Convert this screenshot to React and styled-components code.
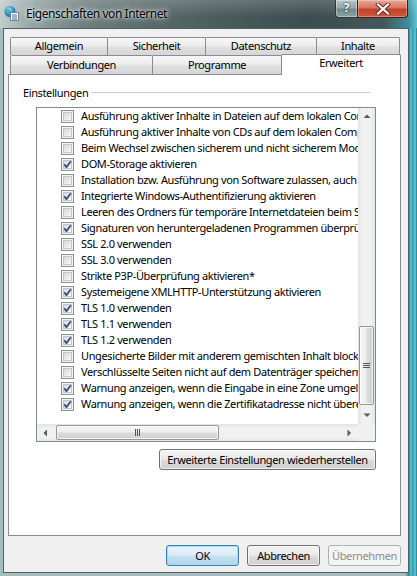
import React from 'react';
import styled, { createGlobalStyle } from 'styled-components';

const GlobalStyle = createGlobalStyle`
  html, body {
    margin: 0;
    padding: 0;
    background: #2a8797;
  }
  body {
    font-family: "Segoe UI", "Noto Sans", "Open Sans", sans-serif;
    font-size: 11px;
    letter-spacing: -0.38px;
    color: #000;
  }
  * { box-sizing: border-box; }
`;

const settings = [
    { label: 'Ausführung aktiver Inhalte in Dateien auf dem lokalen Computer zulassen*', checked: false },
    { label: 'Ausführung aktiver Inhalte von CDs auf dem lokalen Computer zulassen*', checked: false },
    { label: 'Beim Wechsel zwischen sicherem und nicht sicherem Modus warnen', checked: false },
    { label: 'DOM-Storage aktivieren', checked: true },
    { label: 'Installation bzw. Ausführung von Software zulassen, auch wenn die Signatur ungültig ist', checked: false },
    { label: 'Integrierte Windows-Authentifizierung aktivieren', checked: true },
    { label: 'Leeren des Ordners für temporäre Internetdateien beim Schließen des Browsers', checked: false },
    { label: 'Signaturen von heruntergeladenen Programmen überprüfen', checked: true },
    { label: 'SSL 2.0 verwenden', checked: false },
    { label: 'SSL 3.0 verwenden', checked: false },
    { label: 'Strikte P3P-Überprüfung aktivieren*', checked: false },
    { label: 'Systemeigene XMLHTTP-Unterstützung aktivieren', checked: true },
    { label: 'TLS 1.0 verwenden', checked: true },
    { label: 'TLS 1.1 verwenden', checked: true },
    { label: 'TLS 1.2 verwenden', checked: true },
    { label: 'Ungesicherte Bilder mit anderem gemischten Inhalt blockieren', checked: false },
    { label: 'Verschlüsselte Seiten nicht auf dem Datenträger speichern', checked: false },
    { label: 'Warnung anzeigen, wenn die Eingabe in eine Zone umgeleitet wird', checked: true },
    { label: 'Warnung anzeigen, wenn die Zertifikatadresse nicht übereinstimmt*', checked: true },
];

const topTabs = [
    { label: 'Allgemein', w: 98 },
    { label: 'Sicherheit', w: 99 },
    { label: 'Datenschutz', w: 112 },
    { label: 'Inhalte', w: 84 },
];

const bottomTabs = [
    { label: 'Verbindungen', w: 143 },
    { label: 'Programme', w: 130 },
    { label: 'Erweitert', w: 120, active: true },
];

const AppIcon = () => (
    <svg width="16" height="16" viewBox="0 0 16 16">
        <defs>
            <radialGradient id="globe" cx="40%" cy="35%" r="70%">
                <stop offset="0" stopColor="#bfe8ff" />
                <stop offset="0.5" stopColor="#3d9be0" />
                <stop offset="1" stopColor="#1b5aa8" />
            </radialGradient>
        </defs>
        <circle cx="7" cy="6.5" r="5.5" fill="url(#globe)" />
        <path d="M3 5 q2 -2 4 0 q1 2 -1 3 q-2 0 -3 -3z" fill="#4caf50" opacity="0.8" />
        <rect x="7.5" y="7.5" width="8" height="8" fill="#fff" stroke="#6f8796" />
        <rect x="9" y="9.5" width="5" height="1" fill="#2c6fb5" />
        <rect x="9" y="11.5" width="5" height="1" fill="#2c6fb5" />
        <rect x="9" y="13.5" width="5" height="1" fill="#2c6fb5" />
    </svg>
);

const CheckMark = ({ checked }) => (
    <CheckBox>
        <svg width="13" height="13" viewBox="0 0 13 13">
            <defs>
                <linearGradient id="cbFill" x1="0" y1="0" x2="1" y2="1">
                    <stop offset="0" stopColor="#d6d6d6" />
                    <stop offset="1" stopColor="#fbfbfb" />
                </linearGradient>
            </defs>
            <rect x="0.5" y="0.5" width="12" height="12" fill="#f4f4f4" stroke="#8e8f8f" />
            <rect x="2.5" y="2.5" width="8" height="8" fill="url(#cbFill)" stroke="#c6c6c6" />
            {checked && (
                <path d="M3.2 6.4 L5.4 9.2 L9.8 3.2" fill="none" stroke="#3b4f8f" strokeWidth="1.9" strokeLinejoin="round" />
            )}
        </svg>
    </CheckBox>
);

const Arrow = ({ dir }) => {
    const shapes = {
        up: 'M0.5 4 L4 0.5 L7.5 4 Z',
        down: 'M0.5 0.5 L4 4 L7.5 0.5 Z',
        left: 'M4 0.5 L0.5 4 L4 7.5 Z',
        right: 'M0.5 0.5 L4 4 L0.5 7.5 Z',
    };
    const vertical = dir === 'up' || dir === 'down';
    return (
        <svg width={vertical ? 8 : 5} height={vertical ? 5 : 8} viewBox={vertical ? '0 0 8 5' : '0 0 5 8'}>
            <path d={shapes[dir]} fill="#5a5a5a" />
        </svg>
    );
};

const App = () => {
    return (
        <>
            <GlobalStyle />
            <Window>
                <TitleBar>
                    <IconWrap><AppIcon /></IconWrap>
                    <Title>Eigenschaften von Internet</Title>
                    <Caption>
                        <HelpButton>?</HelpButton>
                        <CloseButton>
                            <svg width="16" height="12" viewBox="0 0 16 12">
                                <path d="M3 1.5 L13 10.5 M13 1.5 L3 10.5" stroke="#5c2a22" strokeWidth="4" strokeLinecap="square" />
                                <path d="M3 1.5 L13 10.5 M13 1.5 L3 10.5" stroke="#fff" strokeWidth="2.2" strokeLinecap="square" />
                            </svg>
                        </CloseButton>
                    </Caption>
                </TitleBar>
                <Frame>
                    <Client>
                        <Tabs>
                            <TabRow $h={18}>
                                {topTabs.map((t) => (
                                    <Tab key={t.label} $w={t.w} $h={18}>{t.label}</Tab>
                                ))}
                            </TabRow>
                            <TabRow $h={19}>
                                {bottomTabs.map((t) => (
                                    <Tab key={t.label} $w={t.w} $h={t.active ? 21 : 19} $active={t.active}>{t.label}</Tab>
                                ))}
                            </TabRow>
                            <Page>
                                <GroupHeader>
                                    <span>Einstellungen</span>
                                    <GroupLine />
                                </GroupHeader>
                                <ListBox>
                                    <Rows>
                                        {settings.map((s) => (
                                            <Row key={s.label}>
                                                <CheckMark checked={s.checked} />
                                                <RowText>{s.label}</RowText>
                                            </Row>
                                        ))}
                                    </Rows>
                                    <VScroll>
                                        <ArrowBox><Arrow dir="up" /></ArrowBox>
                                        <VTrack>
                                            <VThumb>
                                                <Grip $vertical />
                                            </VThumb>
                                        </VTrack>
                                        <ArrowBox><Arrow dir="down" /></ArrowBox>
                                    </VScroll>
                                    <HScroll>
                                        <ArrowBox><Arrow dir="left" /></ArrowBox>
                                        <HTrack>
                                            <HThumb>
                                                <Grip />
                                            </HThumb>
                                        </HTrack>
                                        <ArrowBox><Arrow dir="right" /></ArrowBox>
                                    </HScroll>
                                    <Corner />
                                </ListBox>
                                <ResetRow>
                                    <Button $w={217}>Erweiterte Einstellungen wiederherstellen</Button>
                                </ResetRow>
                            </Page>
                        </Tabs>
                        <ButtonRow>
                            <Button $w={73} $default>OK</Button>
                            <Button $w={73}>Abbrechen</Button>
                            <Button $w={73} $disabled>Übernehmen</Button>
                        </ButtonRow>
                    </Client>
                </Frame>
            </Window>
        </>
    );
};

const Window = styled.div`
    width: 417px;
    height: 576px;
    display: flex;
    flex-direction: column;
    overflow: hidden;
`;

const TitleBar = styled.div`
    height: 28px;
    flex: none;
    display: flex;
    align-items: flex-start;
    padding-left: 3px;
    background:
        linear-gradient(180deg, rgba(255,255,255,0.18) 0%, rgba(255,255,255,0) 60%),
        linear-gradient(90deg, #c3cdcd 0%, #93a3a3 8%, #6f8081 20%, #5b6b6c 35%, #4a595a 55%, #3d4c4e 75%, #44585b 92%, #3c8e9c 98%, #5ec3d2 100%);
`;

const IconWrap = styled.div`
    margin-top: 5px;
    width: 16px;
    height: 16px;
`;

const Title = styled.div`
    margin: 6px 0 0 7px;
    font-size: 12px;
    letter-spacing: -0.45px;
    line-height: 16px;
    color: #000;
    text-shadow: 0 0 6px rgba(255,255,255,0.9), 0 0 3px rgba(255,255,255,0.9);
`;

const Caption = styled.div`
    margin-left: auto;
    margin-right: 9px;
    display: flex;
`;

const HelpButton = styled.div`
    width: 22px;
    height: 18px;
    border: 1px solid #2c3a3c;
    border-top: none;
    border-right: none;
    border-radius: 0 0 0 4px;
    background: linear-gradient(180deg, #b7c6c8 0%, #93a7aa 48%, #6e878b 52%, #8aa6aa 100%);
    box-shadow: inset 0 0 0 1px rgba(255,255,255,0.35);
    color: #fff;
    font-weight: bold;
    font-size: 12px;
    line-height: 16px;
    letter-spacing: 0;
    text-align: center;
    text-shadow: 0 0 2px #1f2d2f, 0 0 1px #1f2d2f;
`;

const CloseButton = styled.div`
    width: 51px;
    height: 18px;
    border: 1px solid #4a1a12;
    border-top: none;
    border-radius: 0 0 4px 0;
    background: linear-gradient(180deg, #e7a896 0%, #d8755f 45%, #c2412a 55%, #d0583f 100%);
    box-shadow: inset 0 0 0 1px rgba(255,255,255,0.3);
    display: flex;
    align-items: center;
    justify-content: center;
`;

const Frame = styled.div`
    flex: 1;
    display: flex;
    padding: 0 8px 3px 3px;
    background: linear-gradient(90deg, #a7bcbe 0px, #a7bcbe 405px, #2a8797 409px, #5fc7d6 411px, #2c95a8 413px, #6ccfdc 415px, #237686 417px);
`;

const Client = styled.div`
    flex: 1;
    display: flex;
    flex-direction: column;
    border: 1px solid #4c6265;
    background: #f0f0f0;
    padding: 8px 7px 0 4px;
`;

const Tabs = styled.div`
    width: 393px;
    display: flex;
    flex-direction: column;
`;

const TabRow = styled.div`
    height: ${(p) => p.$h}px;
    display: flex;
    align-items: flex-end;
    padding-left: 2px;
`;

const Tab = styled.div`
    position: relative;
    width: ${(p) => p.$w}px;
    height: ${(p) => p.$h}px;
    margin-left: -1px;
    &:first-child { margin-left: 0; }
    border: 1px solid #898c95;
    border-bottom: none;
    border-radius: 2px 2px 0 0;
    text-align: center;
    font-size: 11px;
    line-height: ${(p) => (p.$active ? 16 : p.$h - 2)}px;
    background: ${(p) => (p.$active ? '#fff' : 'linear-gradient(180deg, #f7f7f7 0%, #ededed 45%, #dfdfdf 55%, #d6d6d6 100%)')};
    margin-bottom: ${(p) => (p.$active ? '-1px' : '0')};
    z-index: ${(p) => (p.$active ? 2 : 1)};
`;

const Page = styled.div`
    height: 462px;
    background: #fff;
    border: 1px solid #898c95;
    display: flex;
    flex-direction: column;
`;

const GroupHeader = styled.div`
    display: flex;
    align-items: center;
    margin: 9px 30px 0 14px;
    height: 16px;
    font-size: 11px;
`;

const GroupLine = styled.div`
    flex: 1;
    margin-left: 3px;
    border-top: 1px solid #c9cdd2;
`;

const ListBox = styled.div`
    margin: 7px 0 0 27px;
    width: 340px;
    height: 335px;
    border: 1px solid #828790;
    display: grid;
    grid-template-columns: 1fr 17px;
    grid-template-rows: 1fr 17px;
    background: #fff;
`;

const Rows = styled.div`
    overflow: hidden;
    display: flex;
    flex-direction: column;
`;

const Row = styled.div`
    height: 16px;
    flex: none;
    display: flex;
    align-items: center;
    padding-left: 24px;
    gap: 7px;
    white-space: nowrap;
`;

const CheckBox = styled.span`
    flex: none;
    width: 13px;
    height: 13px;
    display: flex;
`;

const RowText = styled.span`
    flex: none;
    font-size: 11px;
    line-height: 16px;
`;

const VScroll = styled.div`
    display: flex;
    flex-direction: column;
    background: linear-gradient(90deg, #e3e3e3 0%, #f1f1f1 25%, #f1f1f1 75%, #e6e6e6 100%);
`;

const HScroll = styled.div`
    display: flex;
    background: linear-gradient(180deg, #e3e3e3 0%, #f1f1f1 25%, #f1f1f1 75%, #e6e6e6 100%);
`;

const ArrowBox = styled.div`
    width: 17px;
    height: 17px;
    flex: none;
    display: flex;
    align-items: center;
    justify-content: center;
`;

const VTrack = styled.div`
    flex: 1;
    display: flex;
    flex-direction: column;
    justify-content: flex-end;
    padding: 0 1px 2px 1px;
`;

const HTrack = styled.div`
    flex: 1;
    display: flex;
    padding: 1px 0 1px 2px;
`;

const VThumb = styled.div`
    height: 79px;
    border: 1px solid #979797;
    border-radius: 2px;
    background: linear-gradient(90deg, #f6f6f6 0%, #ececec 48%, #dcdcdc 52%, #d0d0d0 100%);
    box-shadow: inset 0 0 0 1px rgba(255,255,255,0.7);
    display: flex;
    align-items: center;
    justify-content: center;
`;

const HThumb = styled.div`
    width: 163px;
    border: 1px solid #979797;
    border-radius: 2px;
    background: linear-gradient(180deg, #f6f6f6 0%, #ececec 48%, #dcdcdc 52%, #d0d0d0 100%);
    box-shadow: inset 0 0 0 1px rgba(255,255,255,0.7);
    display: flex;
    align-items: center;
    justify-content: center;
`;

const Grip = styled.div`
    width: ${(p) => (p.$vertical ? '7px' : '5px')};
    height: ${(p) => (p.$vertical ? '5px' : '7px')};
    background: ${(p) =>
        p.$vertical
            ? 'repeating-linear-gradient(180deg, #555 0 1px, transparent 1px 2px)'
            : 'repeating-linear-gradient(90deg, #555 0 1px, transparent 1px 2px)'};
`;

const Corner = styled.div`
    background: #f0f0f0;
`;

const ResetRow = styled.div`
    display: flex;
    justify-content: flex-end;
    margin: 7px 24px 0 0;
`;

const Button = styled.div`
    width: ${(p) => p.$w}px;
    height: 21px;
    border: 1px solid ${(p) => (p.$default ? '#3c7fb1' : p.$disabled ? '#adb2b5' : '#707070')};
    border-radius: 3px;
    background: ${(p) =>
        p.$default
            ? 'linear-gradient(180deg, #eaf4fa 0%, #dcecf6 48%, #c6e0f1 52%, #b3d5ec 100%)'
            : p.$disabled
                ? '#f4f4f4'
                : 'linear-gradient(180deg, #f2f2f2 0%, #ebebeb 48%, #dddddd 52%, #cfcfcf 100%)'};
    box-shadow: inset 0 0 0 1px ${(p) => (p.$default ? 'rgba(150,220,250,0.9)' : p.$disabled ? 'transparent' : 'rgba(255,255,255,0.7)')};
    color: ${(p) => (p.$disabled ? '#8d8d8d' : '#000')};
    font-size: 11px;
    line-height: 19px;
    text-align: center;
    white-space: nowrap;
`;

const ButtonRow = styled.div`
    display: flex;
    justify-content: flex-end;
    gap: 8px;
    margin-top: 9px;
`;

export default App;
